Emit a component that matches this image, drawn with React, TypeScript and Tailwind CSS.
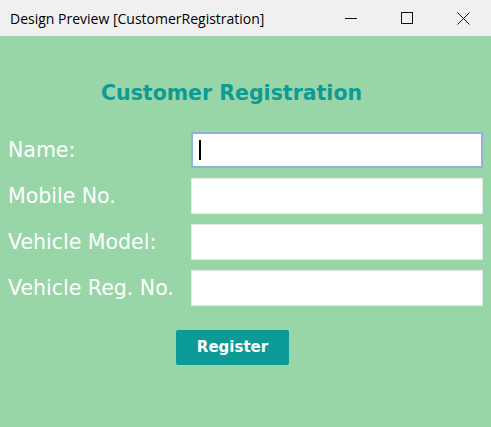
import React from 'react'

const fields = ['Name:', 'Mobile No.', 'Vehicle Model:', 'Vehicle Reg. No.']

export default function App() {
  return (
    <div className="w-[491px] h-[427px] flex flex-col bg-[#98d6a8] overflow-hidden">
      {/* window title bar */}
      <div className="h-[36px] bg-[#f0f0f0] flex items-center shrink-0">
        <span className="pl-[10px] text-[14px] text-black font-['Open_Sans',sans-serif] flex-1">
          Design Preview [CustomerRegistration]
        </span>
        <div className="flex items-center h-full">
          <div className="w-[56px] h-full flex items-center justify-center">
            <svg width="12" height="12" viewBox="0 0 12 12">
              <line x1="0" y1="6.5" x2="12" y2="6.5" stroke="#111" strokeWidth="1" />
            </svg>
          </div>
          <div className="w-[56px] h-full flex items-center justify-center">
            <svg width="12" height="12" viewBox="0 0 12 12">
              <rect x="0.5" y="0.5" width="11" height="11" fill="none" stroke="#111" strokeWidth="1" />
            </svg>
          </div>
          <div className="w-[56px] h-full flex items-center justify-center">
            <svg width="13" height="13" viewBox="0 0 13 13">
              <path d="M0.5 0.5L12.5 12.5M12.5 0.5L0.5 12.5" stroke="#111" strokeWidth="1" />
            </svg>
          </div>
        </div>
      </div>

      <div className="flex flex-col font-['DejaVu_Sans',sans-serif]">
        <h1 className="mt-[44px] h-[26px] ml-[101px] text-[20.5px] font-bold text-[#0e9a95] leading-[26px] whitespace-nowrap">
          Customer Registration
        </h1>

        <div className="mt-[26px] flex flex-col gap-[10px]">
          {fields.map((f, i) => (
            <div key={f} className="flex items-center h-[36px]">
              <label className="w-[191px] pl-[8px] text-[20.5px] text-white whitespace-nowrap">{f}</label>
              <div
                className={
                  i === 0
                    ? 'w-[292px] h-[36px] bg-white border-2 border-[#8fb2da] flex items-center pl-[6px]'
                    : 'w-[292px] h-[36px] bg-white border border-[#e4ebe6]'
                }
              >
                {i === 0 && <div className="w-[2px] h-[20px] bg-black" />}
              </div>
            </div>
          ))}
        </div>

        <div className="mt-[24px] ml-[176px]">
          <button className="w-[113px] h-[35px] rounded-[2px] bg-[#0b9a96] text-white font-bold text-[15px]">
            Register
          </button>
        </div>
      </div>
    </div>
  )
}
